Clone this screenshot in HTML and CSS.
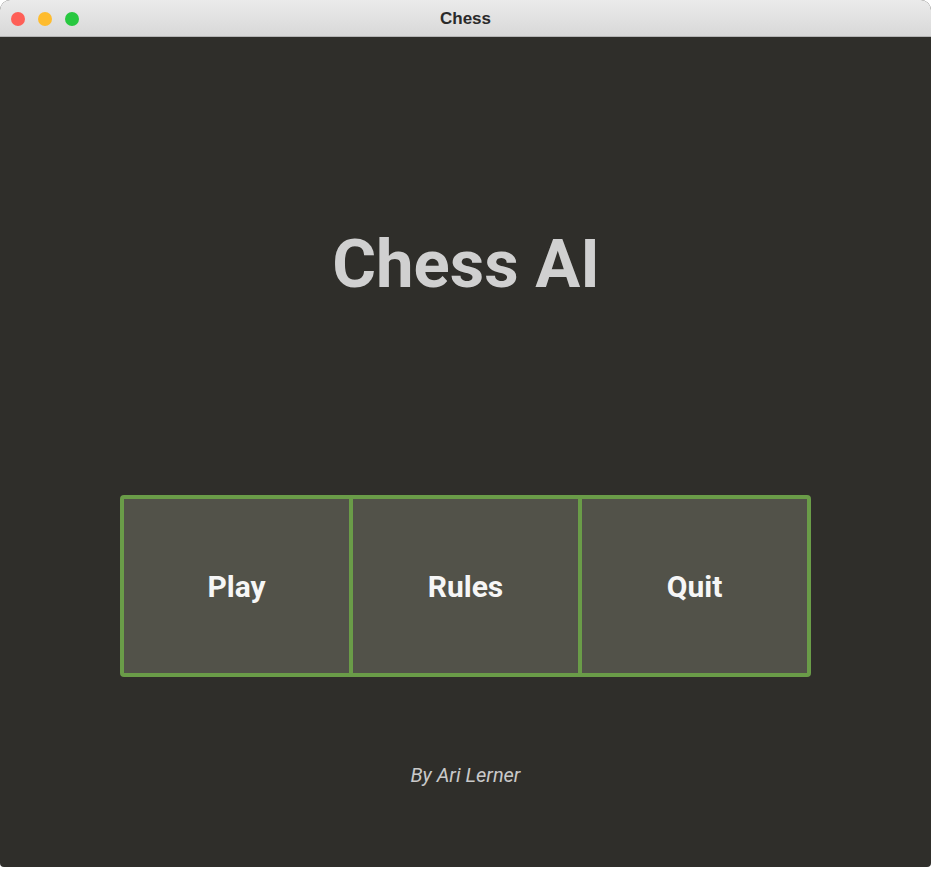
FILE: index.html
```html
<!DOCTYPE html>
<html>
<head>
<meta charset="utf-8">
<link rel="stylesheet" href="styles.css">
</head>
<body>
<div class="window">
  <div class="titlebar">
    <div class="lights">
      <span class="light red"></span>
      <span class="light yellow"></span>
      <span class="light green"></span>
    </div>
    <div class="wintitle">Chess</div>
  </div>
  <div class="content">
    <h1 class="title">Chess AI</h1>
    <div class="menu">
      <div class="btn">Play</div>
      <div class="btn">Rules</div>
      <div class="btn">Quit</div>
    </div>
    <p class="byline">By Ari Lerner</p>
  </div>
</div>
</body>
</html>
```
FILE: styles.css
```css
html, body {
  margin: 0;
  padding: 0;
  background: #ffffff;
}
.window {
  width: 931px;
  height: 867px;
  border-radius: 10px 10px 4px 4px;
  overflow: hidden;
  display: flex;
  flex-direction: column;
  background: #2f2e2a;
}
.titlebar {
  height: 36px;
  flex: none;
  background: linear-gradient(#ebebeb, #d8d8d8);
  border-bottom: 1px solid #b4b4b4;
  position: relative;
  display: flex;
  align-items: center;
  justify-content: center;
}
.lights {
  position: absolute;
  left: 11px;
  top: 12px;
  display: flex;
  gap: 13px;
}
.light {
  width: 14px;
  height: 14px;
  border-radius: 50%;
  display: block;
}
.red { background: #fe5f57; }
.yellow { background: #febc2e; }
.green { background: #28c840; }
.wintitle {
  font-family: "Liberation Sans", Arial, sans-serif;
  font-weight: bold;
  font-size: 17px;
  color: #2a2a2a;
  padding-top: 1px;
}
.content {
  flex: 1;
  display: flex;
  flex-direction: column;
  align-items: center;
}
.title {
  margin: 187px 0 0 0;
  font-family: Roboto, "Liberation Sans", sans-serif;
  font-weight: 700;
  font-size: 67px;
  line-height: 80px;
  color: #d0d0d0;
  padding-left: 1px;
}
.menu {
  margin-top: 191px;
  display: grid;
  grid-template-columns: repeat(3, 1fr);
  gap: 4px;
  padding: 4px;
  width: 683px;
  height: 174px;
  background: #6a9c48;
  border-radius: 4px;
}
.btn {
  background: #525249;
  display: flex;
  align-items: center;
  justify-content: center;
  font-family: Roboto, "Liberation Sans", sans-serif;
  font-weight: 700;
  font-size: 30px;
  color: #f6f6f6;
}
.byline {
  margin: 86px 0 0 0;
  font-family: Roboto, "Liberation Sans", sans-serif;
  font-style: italic;
  font-size: 20px;
  color: #c9c9c9;
}
```
